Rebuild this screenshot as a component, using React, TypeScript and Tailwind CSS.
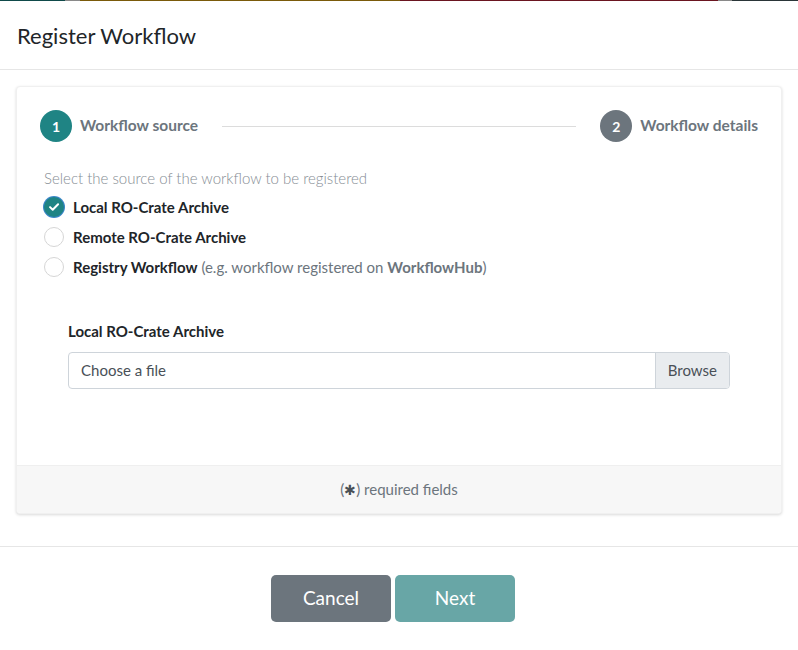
import React, { useState } from 'react';

const TEAL = 'bg-[#1f8484]';

const sources = [
  { id: 'local', label: 'Local RO-Crate Archive' },
  { id: 'remote', label: 'Remote RO-Crate Archive' },
  { id: 'registry', label: 'Registry Workflow' },
];

const Radio: React.FC<{ checked: boolean }> = ({ checked }) =>
  checked ? (
    <span className={`flex h-5 w-5 items-center justify-center rounded-full ${TEAL} ring-1 ring-[#3a86c8]`}>
      <svg width="14" height="14" viewBox="0 0 12 12" fill="none">
        <path d="M2.6 6.1l2.3 2.3 4.6-4.8" stroke="white" strokeWidth="1.7" strokeLinecap="round" strokeLinejoin="round" />
      </svg>
    </span>
  ) : (
    <span className="h-5 w-5 rounded-full border border-[#d6d6d6] bg-white" />
  );

const App: React.FC = () => {
  const [source, setSource] = useState('local');

  return (
    <div className="h-[650px] w-[798px] bg-white font-['Lato',sans-serif] text-[#212529]">
      {/* page behind the modal */}
      <div className="flex h-px">
        <div className="w-[65px] bg-[#0f4a4a]" />
        <div className="w-[15px] bg-[#8a8a8a]" />
        <div className="w-[320px] bg-[#7a5a0a]" />
        <div className="w-[318px] bg-[#6a1520]" />
        <div className="w-[14px] bg-[#8a8a8a]" />
        <div className="flex-1 bg-[#2a3538]" />
      </div>

      {/* header */}
      <div className="flex h-[69px] items-center border-b border-[#e6e6e6] px-[17px]">
        <h1 className="text-[22px] font-normal text-[#212529]">Register Workflow</h1>
      </div>

      {/* body */}
      <div className="px-4 pt-4 pb-8">
        <div className="rounded-[4px] border border-[#f0f0f0] bg-white shadow-[0_1px_3px_rgba(0,0,0,0.15)]">
          <div className="px-[23px] pt-[23px] pb-[76px]">
            {/* stepper */}
            <div className="flex items-center">
              <div className="flex items-center gap-2">
                <span className={`flex h-8 w-8 items-center justify-center rounded-full ${TEAL} text-[14px] font-bold text-white`}>1</span>
                <span className="text-[15.5px] font-bold text-[#6c757d]">Workflow source</span>
              </div>
              <div className="mx-6 h-px flex-1 bg-[#dcdcdc]" />
              <div className="flex items-center gap-2">
                <span className="flex h-8 w-8 items-center justify-center rounded-full bg-[#6c757d] text-[14px] font-bold text-white">2</span>
                <span className="text-[15.5px] font-bold text-[#6c757d]">Workflow details</span>
              </div>
            </div>

            {/* source choice */}
            <div className="mt-[26px] pl-1">
              <p className="text-[15px] leading-5 font-light text-[#868d94]">Select the source of the workflow to be registered</p>
              <div className="mt-[4px] flex flex-col">
                {sources.map((s) => (
                  <label key={s.id} className="flex h-[30px] cursor-pointer items-center gap-[9px]" onClick={() => setSource(s.id)}>
                    <Radio checked={source === s.id} />
                    <span className="text-[15px] font-bold text-[#212529]">
                      {s.label}
                      {s.id === 'registry' && (
                        <span className="font-normal text-[#6c757d]">
                          {' '}(e.g. workflow registered on <span className="font-bold">WorkflowHub</span>)
                        </span>
                      )}
                    </span>
                  </label>
                ))}
              </div>
            </div>

            {/* file input */}
            <div className="mt-[38px] px-7">
              <div className="text-[15px] font-bold text-[#212529]">Local RO-Crate Archive</div>
              <div className="mt-[9px] flex h-[37px] overflow-hidden rounded-[4px] border border-[#ced4da]">
                <div className="flex flex-1 items-center px-3 text-[15px] text-[#495057]">Choose a file</div>
                <div className="flex items-center border-l border-[#ced4da] bg-[#e9ecef] px-3 text-[15px] text-[#495057]">Browse</div>
              </div>
            </div>
          </div>

          {/* card footer */}
          <div className="flex h-12 items-center justify-center rounded-b-[4px] border-t border-[#efefef] bg-[#f7f7f7] text-[15px] text-[#6c757d]">
            (<span className="text-[14px] text-[#495057]">✱</span>) required fields
          </div>
        </div>
      </div>

      {/* modal footer */}
      <div className="flex justify-center gap-1 border-t border-[#e6e6e6] pt-[28px] pr-3">
        <button className="h-[47px] w-[120px] rounded-[5px] bg-[#6c757d] text-[19px] text-white">Cancel</button>
        <button className="h-[47px] w-[120px] rounded-[5px] bg-[#68a6a6] text-[19px] text-white">Next</button>
      </div>
    </div>
  );
};

export default App;
